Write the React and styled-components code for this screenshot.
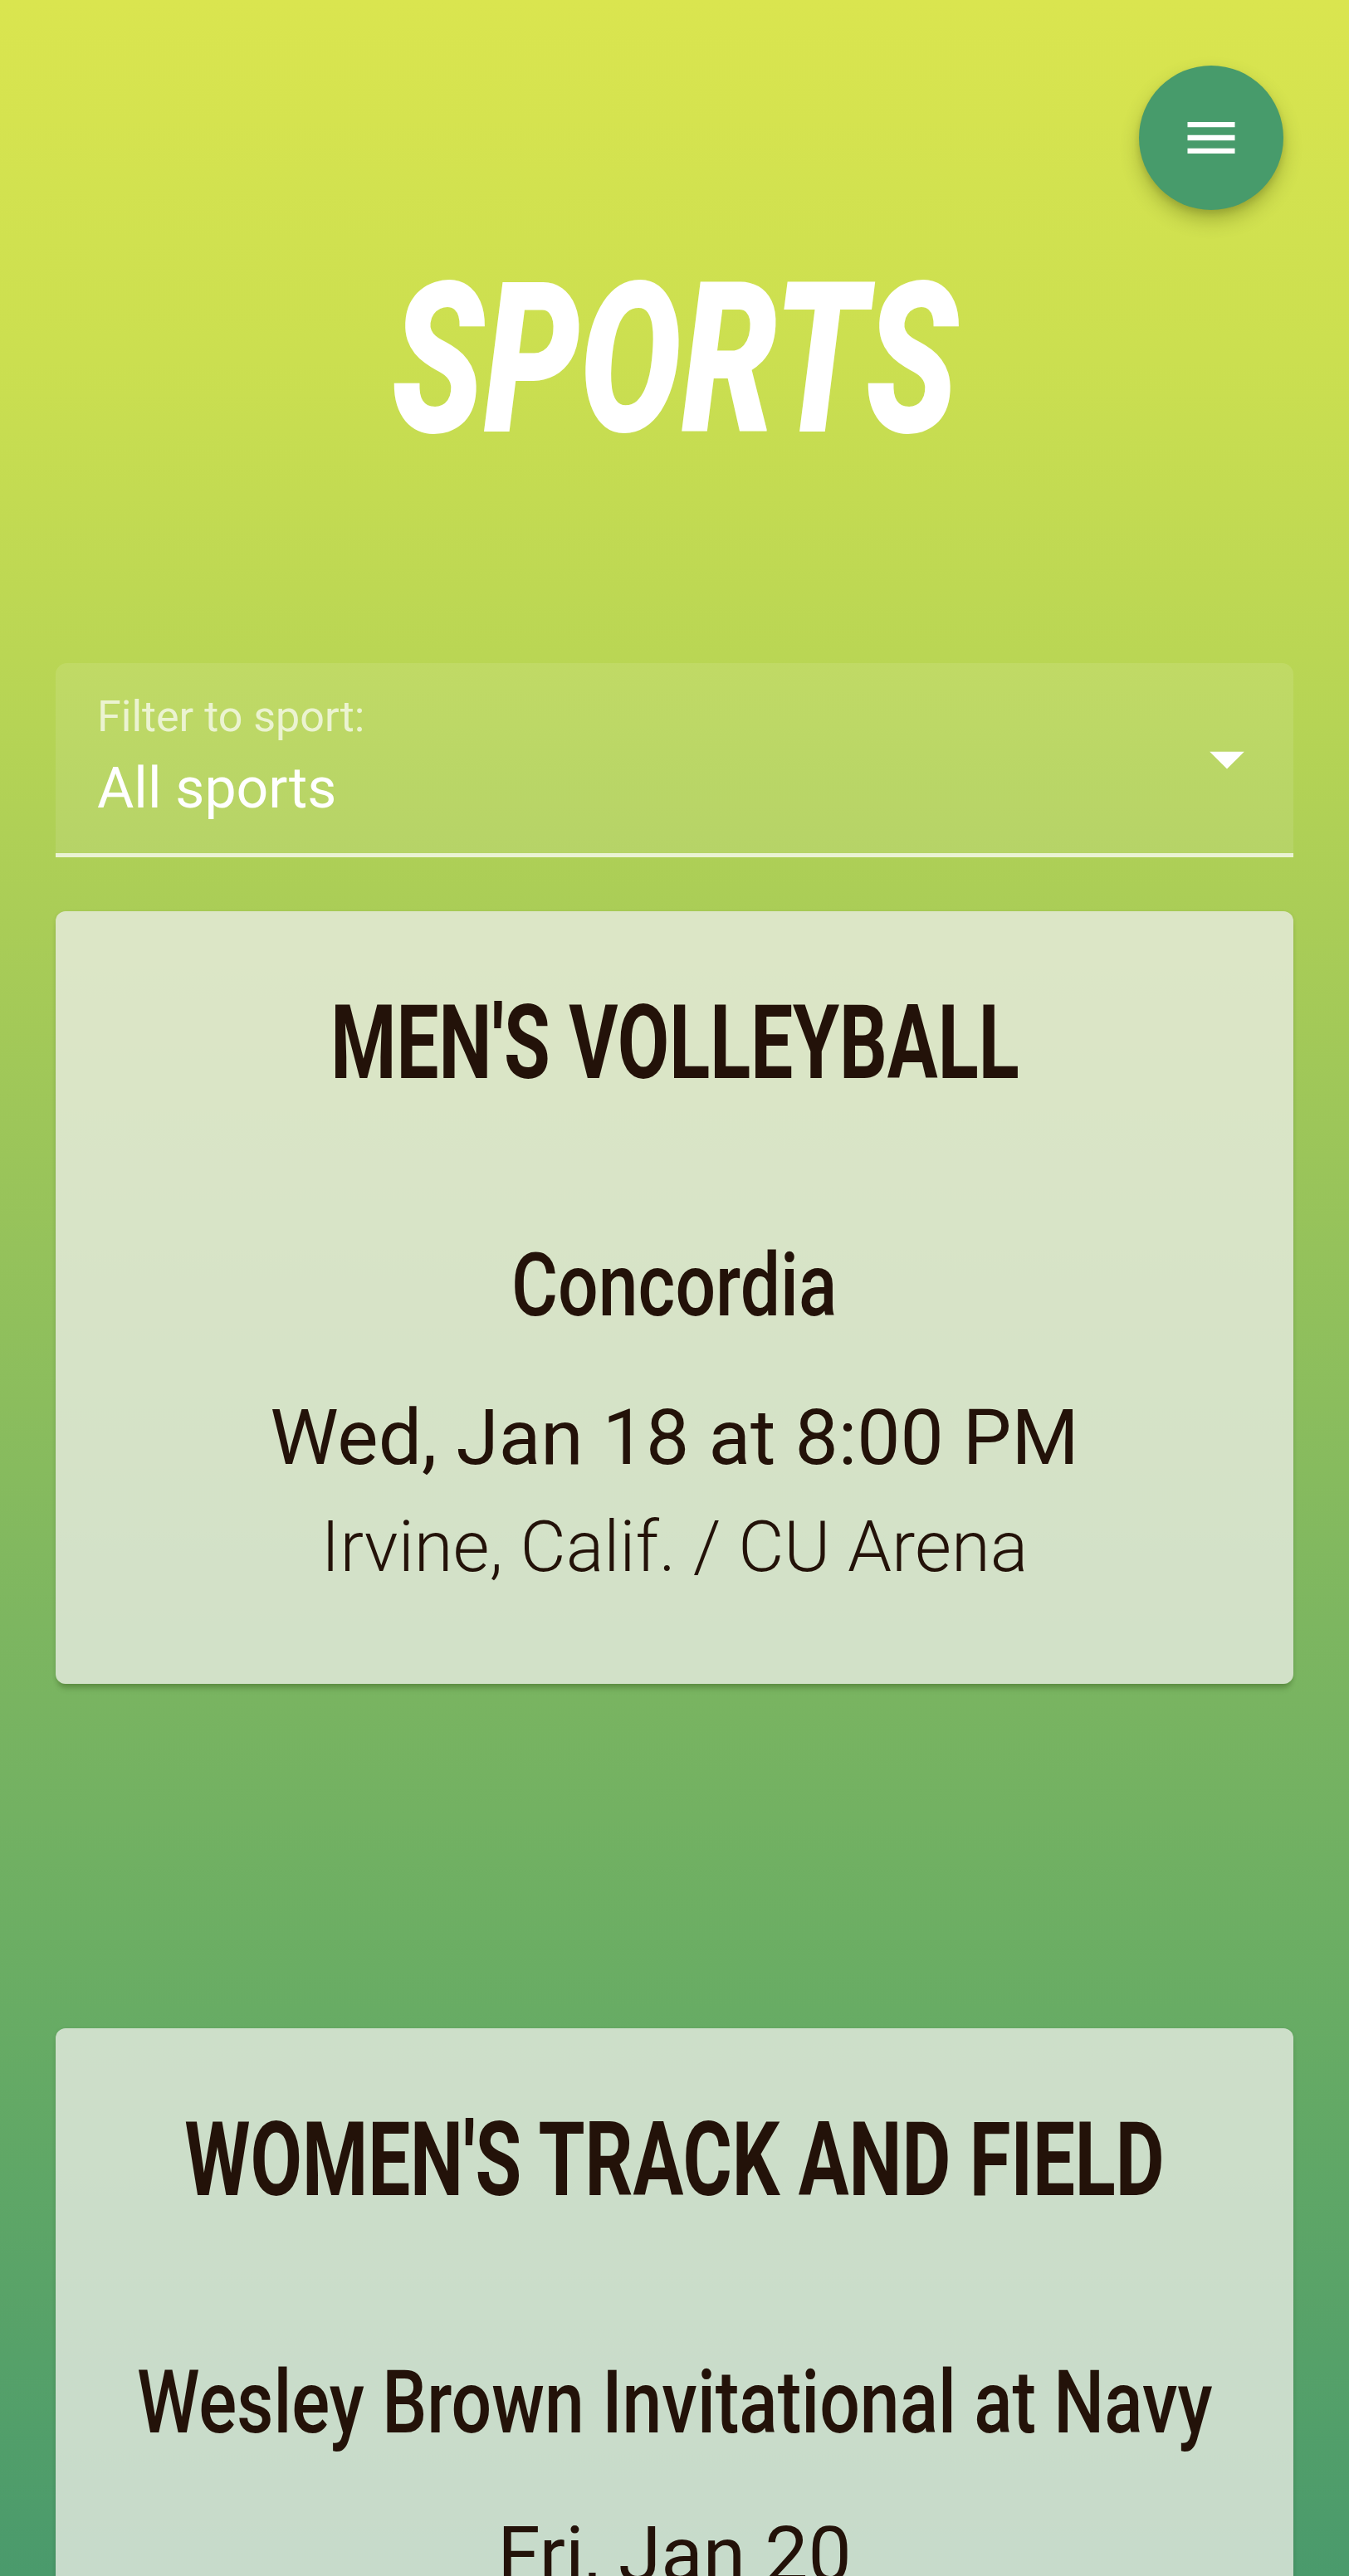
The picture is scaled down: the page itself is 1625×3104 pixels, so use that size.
import React from 'react'
import styled, { createGlobalStyle } from 'styled-components'

const GlobalStyle = createGlobalStyle`
  html, body {
    margin: 0;
    padding: 0;
  }
  body {
    font-family: Roboto, "Liberation Sans", sans-serif;
  }
`

const Page = styled.div`
  box-sizing: border-box;
  height: 100vh;
  overflow: hidden;
  padding: 307px 67px 0;
  display: flex;
  flex-direction: column;
  background: linear-gradient(
    180deg,
    #dae54f 0%,
    #cbdf50 14%,
    #b6d455 28%,
    #a3c958 40%,
    #7db660 63%,
    #68ac64 78%,
    #4a9a6c 100%
  );
`

const MenuButton = styled.button`
  position: fixed;
  top: 79px;
  right: 79px;
  width: 174px;
  height: 174px;
  border: none;
  border-radius: 50%;
  background: #479b6b;
  box-shadow: 0 12px 22px rgba(60, 70, 0, 0.3), 0 4px 8px rgba(0, 0, 0, 0.12);
  display: flex;
  align-items: center;
  justify-content: center;
  padding: 0;
  cursor: pointer;
`

const Title = styled.h1`
  margin: 0;
  align-self: center;
  font-family: Roboto, "Liberation Sans", sans-serif;
  font-size: 253px;
  line-height: 253px;
  font-weight: 900;
  font-style: italic;
  color: #fff;
  white-space: nowrap;
  transform: scaleX(0.723);
`

const FilterBox = styled.div`
  box-sizing: border-box;
  margin-top: 239px;
  height: 234px;
  display: grid;
  grid-template-columns: 1fr auto;
  align-items: center;
  padding: 0 30px 0 50px;
  background: rgba(255, 255, 255, 0.1);
  border-radius: 14px 14px 0 0;
  border-bottom: 5px solid rgba(255, 255, 255, 0.72);
  flex-shrink: 0;
`

const FilterText = styled.div`
  align-self: start;
  padding-top: 39px;
  display: flex;
  flex-direction: column;
  gap: 26px;
`

const FilterLabel = styled.span`
  font-size: 52px;
  line-height: 52px;
  color: rgba(255, 255, 255, 0.7);
`

const FilterValue = styled.span`
  font-size: 68px;
  line-height: 68px;
  color: #fff;
`

const Card = styled.section`
  flex-shrink: 0;
  margin-top: 65px;
  padding: 97px 24px 122px;
  display: flex;
  flex-direction: column;
  align-items: center;
  text-align: center;
  color: #231209;
  background: rgba(234, 237, 230, 0.78);
  border-radius: 12px;
  box-shadow: 0 9px 6px -3px rgba(30, 60, 0, 0.22), 0 2px 5px rgba(30, 60, 0, 0.14);

  & + & {
    margin-top: 415px;
  }
`

const Sport = styled.h2`
  margin: 0;
  font-size: 124px;
  line-height: 124px;
  font-weight: 700;
  white-space: nowrap;
  transform: scaleX(0.73);
`

const Opponent = styled.h3`
  margin: 177px 0 0;
  font-size: 106px;
  line-height: 106px;
  font-weight: 500;
  white-space: nowrap;
  transform: scaleX(0.81);
`

const When = styled.p`
  margin: 84px 0 0;
  font-size: 93px;
  line-height: 93px;
  font-weight: 400;
`

const Where = styled.p`
  margin: 43px 0 0;
  font-size: 85px;
  line-height: 85px;
  font-weight: 300;
`

const MenuIcon = () => (
  <svg width="76" height="76" viewBox="0 0 24 24" fill="#fff">
    <path d="M3 18h18v-2H3v2zm0-5h18v-2H3v2zm0-7v2h18V6H3z" />
  </svg>
)

const ArrowIcon = () => (
  <svg width="100" height="100" viewBox="0 0 24 24" fill="#fff">
    <path d="M7 10l5 5 5-5z" />
  </svg>
)

const events = [
  {
    sport: "MEN'S VOLLEYBALL",
    opponent: 'Concordia',
    when: 'Wed, Jan 18 at 8:00 PM',
    where: 'Irvine, Calif. / CU Arena',
  },
  {
    sport: "WOMEN'S TRACK AND FIELD",
    opponent: 'Wesley Brown Invitational at Navy',
    when: 'Fri, Jan 20',
  },
]

const App = () => {
  return (
    <>
      <GlobalStyle />
      <Page>
        <MenuButton aria-label="menu">
          <MenuIcon />
        </MenuButton>

        <Title>SPORTS</Title>

        <FilterBox>
          <FilterText>
            <FilterLabel>Filter to sport:</FilterLabel>
            <FilterValue>All sports</FilterValue>
          </FilterText>
          <ArrowIcon />
        </FilterBox>

        {events.map(ev => (
          <Card key={ev.sport}>
            <Sport>{ev.sport}</Sport>
            <Opponent>{ev.opponent}</Opponent>
            <When>{ev.when}</When>
            {ev.where && <Where>{ev.where}</Where>}
          </Card>
        ))}
      </Page>
    </>
  )
}

export default App
